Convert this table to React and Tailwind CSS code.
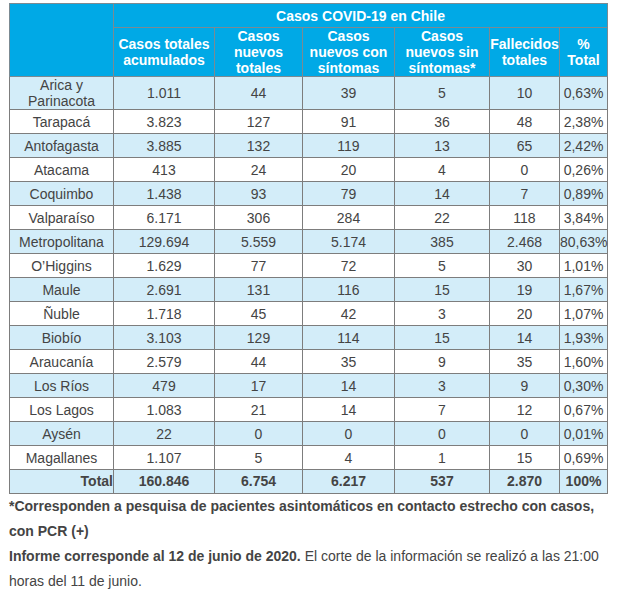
import React from "react";

const rows = [
    ["Arica y Parinacota", "1.011", "44", "39", "5", "10", "0,63%"],
    ["Tarapacá", "3.823", "127", "91", "36", "48", "2,38%"],
    ["Antofagasta", "3.885", "132", "119", "13", "65", "2,42%"],
    ["Atacama", "413", "24", "20", "4", "0", "0,26%"],
    ["Coquimbo", "1.438", "93", "79", "14", "7", "0,89%"],
    ["Valparaíso", "6.171", "306", "284", "22", "118", "3,84%"],
    ["Metropolitana", "129.694", "5.559", "5.174", "385", "2.468", "80,63%"],
    ["O’Higgins", "1.629", "77", "72", "5", "30", "1,01%"],
    ["Maule", "2.691", "131", "116", "15", "19", "1,67%"],
    ["Ñuble", "1.718", "45", "42", "3", "20", "1,07%"],
    ["Biobío", "3.103", "129", "114", "15", "14", "1,93%"],
    ["Araucanía", "2.579", "44", "35", "9", "35", "1,60%"],
    ["Los Ríos", "479", "17", "14", "3", "9", "0,30%"],
    ["Los Lagos", "1.083", "21", "14", "7", "12", "0,67%"],
    ["Aysén", "22", "0", "0", "0", "0", "0,01%"],
    ["Magallanes", "1.107", "5", "4", "1", "15", "0,69%"],
];

const total = ["160.846", "6.754", "6.217", "537", "2.870", "100%"];

const headers = [
    "Casos totales acumulados",
    "Casos nuevos totales",
    "Casos nuevos con síntomas",
    "Casos nuevos sin síntomas*",
    "Fallecidos totales",
    "% Total",
];

const widths = [104, 101, 88, 92, 95, 70, 48];

export default function App() {
    return (
        <div className="min-h-screen bg-white pl-[9px] pt-[3px] font-['Liberation_Sans',Arial,sans-serif] text-[14px] text-[#444]">
            <div className="w-[598px]">
                <table className="w-[598px] table-fixed border-collapse border border-[#333]">
                    <colgroup>
                        {widths.map((w, i) => (
                            <col key={i} style={{ width: w }} />
                        ))}
                    </colgroup>
                    <thead className="bg-[#00a9e6] font-bold leading-[16px] text-white">
                        <tr className="h-[24px]">
                            <th rowSpan={2} className="border border-[#7b8a92] p-0"></th>
                            <th colSpan={6} className="border border-[#7b8a92] p-0 text-center">
                                Casos COVID-19 en Chile
                            </th>
                        </tr>
                        <tr className="h-[49px]">
                            {headers.map((h, i) => (
                                <th key={i} className="border border-[#7b8a92] p-0 text-center align-middle">
                                    {h}
                                </th>
                            ))}
                        </tr>
                    </thead>
                    <tbody>
                        {rows.map((r, i) => (
                            <tr
                                key={i}
                                className={`${i === 0 ? "h-[33px]" : "h-[24px]"} ${i % 2 === 0 ? "bg-[#d3edf9]" : "bg-white"}`}
                            >
                                {r.map((c, j) => (
                                    <td
                                        key={j}
                                        className="border border-[#7d7d7d] p-0 text-center align-middle leading-[16px] whitespace-nowrap"
                                    >
                                        {i === 0 && j === 0 ? (
                                            <>
                                                Arica y
                                                <br />
                                                Parinacota
                                            </>
                                        ) : (
                                            c
                                        )}
                                    </td>
                                ))}
                            </tr>
                        ))}
                        <tr className="h-[24px] bg-[#d3edf9] font-bold">
                            <td className="border border-[#7d7d7d] p-0 text-right align-middle">Total</td>
                            {total.map((c, j) => (
                                <td key={j} className="border border-[#7d7d7d] p-0 text-center align-middle">
                                    {c}
                                </td>
                            ))}
                        </tr>
                    </tbody>
                </table>

                {/* notas */}
                <div className="leading-[25px]">
                    <p className="font-bold">
                        *Corresponden a pesquisa de pacientes asintomáticos en contacto estrecho con casos, con PCR (+)
                    </p>
                    <p>
                        <span className="font-bold">Informe corresponde al 12 de junio de 2020.</span> El corte de la
                        información se realizó a las 21:00 horas del 11 de junio.
                    </p>
                </div>
            </div>
        </div>
    );
}
